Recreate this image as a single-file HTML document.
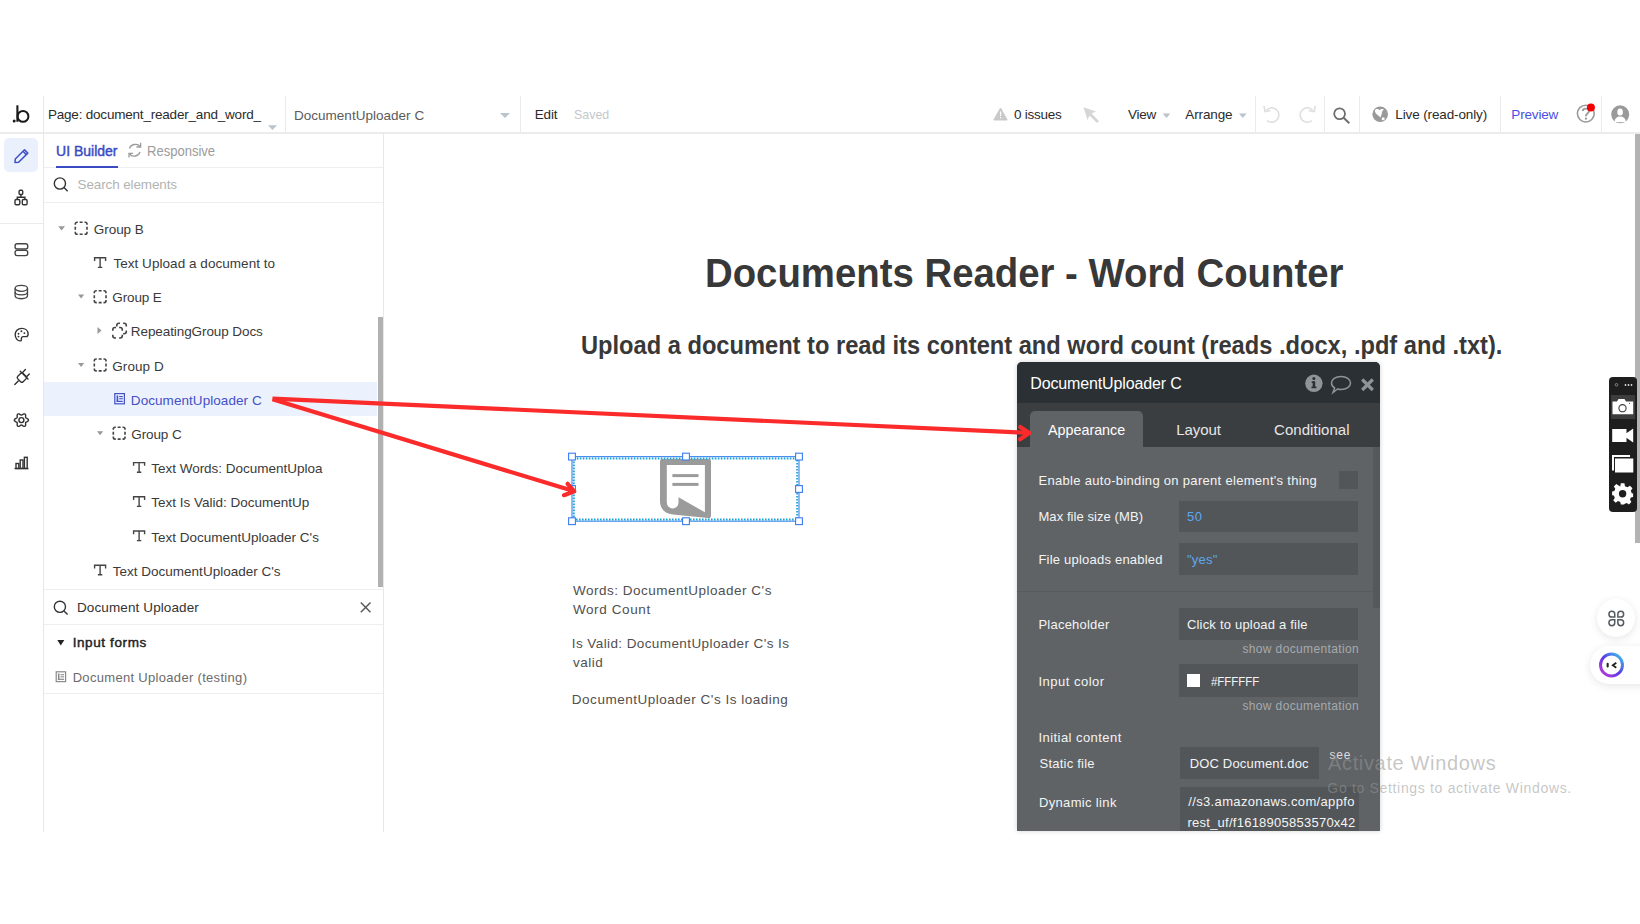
<!DOCTYPE html>
<html><head><meta charset="utf-8">
<style>
*{margin:0;padding:0;box-sizing:border-box}
html,body{width:1640px;height:924px;overflow:hidden;background:#fff;font-family:"Liberation Sans",sans-serif}
.a{position:absolute}
.t{position:absolute;white-space:nowrap;line-height:1}
.hl{position:absolute;height:1px;background:#e9ebed}
.vl{position:absolute;width:1px;background:#e9ebed}
svg{position:absolute;overflow:visible}
.ib{position:absolute;background:#525659}
</style></head><body>

<!-- ============ TOP BAR ============ -->
<div class="hl" style="left:0;top:132px;width:1640px;height:2px;background:#ececec"></div>
<div class="vl" style="left:285px;top:96px;height:37px"></div>
<div class="vl" style="left:520px;top:96px;height:37px"></div>
<div class="vl" style="left:1255px;top:96px;height:37px"></div>
<div class="vl" style="left:1324px;top:96px;height:37px"></div>
<div class="vl" style="left:1359px;top:96px;height:37px"></div>
<div class="vl" style="left:1500px;top:96px;height:37px"></div>
<div class="vl" style="left:1601px;top:96px;height:37px"></div>

<!-- logo .b -->
<svg style="left:0;top:0" width="40" height="133">
  <circle cx="14.2" cy="121.1" r="1.5" fill="#1a1a1a"/>
  <path d="M17.4 105.3 V121.8" stroke="#1a1a1a" stroke-width="2.1" fill="none"/>
  <circle cx="23.0" cy="116.4" r="5.4" stroke="#1a1a1a" stroke-width="2.0" fill="none"/>
</svg>
<!-- dropdown triangles -->
<svg style="left:0;top:0" width="1640" height="133">
  <path d="M268 125.2 L277 125.2 L272.5 130 Z" fill="#b9c4cc"/>
  <path d="M500 113 L510 113 L505 118 Z" fill="#b9c4cc"/>
  <path d="M1162.7 113.4 L1170.3 113.4 L1166.5 118 Z" fill="#b9c4cc"/>
  <path d="M1239 113.4 L1246.6 113.4 L1242.8 118 Z" fill="#b9c4cc"/>
  <!-- warning -->
  <path d="M1000.5 108 L1007.2 120 L993.8 120 Z" fill="#c9c9c9" stroke="#c9c9c9" stroke-width="1" stroke-linejoin="round"/>
  <rect x="1000" y="111.5" width="1.2" height="4.5" fill="#fff"/>
  <rect x="1000" y="117" width="1.2" height="1.3" fill="#fff"/>
  <!-- cursor -->
  <path d="M1083.5 107.2 L1096 111.5 L1091.5 113.5 L1099 121 L1097 123 L1089.5 115.5 L1087.5 120 Z" fill="#d6d6d6"/>
  <!-- undo / redo -->
  <path d="M1266.5 110 A7.2 7.2 0 1 1 1267 120.5" stroke="#dedede" stroke-width="1.6" fill="none"/>
  <path d="M1264 105.8 L1265 111.5 L1270.5 110.5" stroke="#dedede" stroke-width="1.6" fill="none"/>
  <path d="M1312.5 110 A7.2 7.2 0 1 0 1312 120.5" stroke="#dedede" stroke-width="1.6" fill="none"/>
  <path d="M1315.2 105.8 L1314.2 111.5 L1308.7 110.5" stroke="#dedede" stroke-width="1.6" fill="none"/>
  <!-- search -->
  <circle cx="1339.6" cy="113.8" r="5.4" stroke="#6e6e6e" stroke-width="1.8" fill="none"/>
  <path d="M1343.6 117.8 L1349.3 123.3" stroke="#6e6e6e" stroke-width="2" fill="none"/>
  <!-- globe -->
  <circle cx="1380.2" cy="114.2" r="7.8" fill="#9a9a9a"/>
  <path d="M1375 110.3 C1376 108.6 1378.5 108.8 1379.4 110.2 C1380.3 109.3 1381.8 108.8 1383.8 109.3 C1383.3 110.3 1382.5 110.8 1382.2 111.6 C1381.5 112.8 1382.3 113.6 1381.3 115 C1380.9 116 1381 116.8 1380.6 117.6 C1379.5 116.3 1378.3 115.5 1377 114.5 C1375.6 113.3 1374.6 112 1375 110.3 Z" fill="#fff"/>
  <circle cx="1383.2" cy="118.8" r="1.5" fill="#fff"/>
  <!-- help -->
  <circle cx="1585.8" cy="113.6" r="8.4" stroke="#9a9a9a" stroke-width="1.6" fill="none"/>
  <path d="M1582.8 111 C1582.8 107.8 1589 107.8 1589 111 C1589 113.2 1585.9 113.6 1585.9 116.2" stroke="#9a9a9a" stroke-width="1.9" fill="none"/>
  <rect x="1584.9" y="117.6" width="2" height="2" fill="#9a9a9a"/>
  <circle cx="1590.9" cy="107.4" r="4" fill="#f40000"/>
  <!-- user -->
  <circle cx="1620.2" cy="114.35" r="9" fill="#9a9a9a"/>
  <ellipse cx="1620.1" cy="112.1" rx="2.8" ry="3.5" fill="#fff"/>
  <path d="M1614.6 121.8 C1614.6 118.5 1617 117.2 1618.8 116.5 L1621.4 116.5 C1623.4 117.2 1625.8 118.5 1625.8 121.8 C1622.5 122.5 1617.9 122.5 1614.6 121.8 Z" fill="#fff"/>
</svg>

<!-- ============ LEFT RAIL ============ -->
<div class="vl" style="left:43px;top:96px;height:736px;background:#e6e8ea"></div>
<div class="hl" style="left:0;top:223px;width:43px"></div>
<div class="a" style="left:4px;top:138px;width:34px;height:34px;border-radius:5px;background:#eaf1fd"></div>
<svg style="left:0;top:0" width="44" height="480">
  <!-- pencil -->
  <path d="M15.3 159 L24.5 149.8 L27.8 153.1 L18.6 162.3 L15 162.5 Z" stroke="#3d50c8" stroke-width="1.5" fill="none" stroke-linejoin="round"/>
  <path d="M23 151.3 L26.3 154.6" stroke="#3d50c8" stroke-width="1.5"/>
  <!-- hierarchy -->
  <g stroke="#333" stroke-width="1.4" fill="none">
    <rect x="19.1" y="190.3" width="3.6" height="4.2" rx="1"/>
    <path d="M20.9 194.5 V197.2 M17.3 199.5 V197.2 H24.9 V199.5"/>
    <rect x="15" y="199.5" width="4.8" height="5.2" rx="1.2"/>
    <rect x="22.3" y="199.5" width="4.8" height="5.2" rx="1.2"/>
  </g>
  <!-- server -->
  <g stroke="#444" stroke-width="1.4" fill="none">
    <rect x="15.1" y="243.8" width="12.6" height="5.2" rx="2"/>
    <rect x="15.1" y="250.4" width="12.6" height="5.2" rx="2"/>
  </g>
  <!-- database -->
  <g stroke="#444" stroke-width="1.3" fill="none">
    <ellipse cx="21.3" cy="288.3" rx="6.2" ry="3"/>
    <path d="M15.1 288.3 V295.6 C15.1 299.8 27.5 299.8 27.5 295.6 V288.3"/>
    <path d="M15.1 292 C15.1 295.8 27.5 295.8 27.5 292"/>
  </g>
  <!-- palette -->
  <g stroke="#333" stroke-width="1.4" fill="none" stroke-linejoin="round">
    <path d="M21.8 328.4 C17.6 328.4 15.2 331.3 15.2 334.6 C15.2 338.2 17.6 340.9 20 340.9 C21.6 340.9 21.4 339.3 21.4 338.4 C21.4 337.4 22.2 336.6 23.2 336.6 H26 C27.4 336.6 28.1 335.6 28.1 334.2 C28.1 330.8 25.5 328.4 21.8 328.4 Z"/>
  </g>
  <circle cx="18.5" cy="333.7" r="0.95" fill="#333"/><circle cx="21.4" cy="331.3" r="0.95" fill="#333"/><circle cx="24.4" cy="333.1" r="0.95" fill="#333"/><circle cx="18.5" cy="336.6" r="0.95" fill="#333"/>
  <!-- plug -->
  <g stroke="#333" stroke-width="1.4" fill="none" stroke-linecap="round" stroke-linejoin="round">
    <rect x="18.1" y="373.8" width="7.6" height="7.6" rx="1.8" transform="rotate(45 21.9 377.6)"/>
    <path d="M20.3 371.3 L28 379"/>
    <path d="M22.6 372.4 L25.4 369.6 M26.8 376.6 L29.3 374.1"/>
    <path d="M18.3 380.9 L14.8 384.4"/>
  </g>
  <!-- gear -->
  <g stroke="#333" stroke-width="1.4" fill="none">
    <path d="M28.45 420.10 L28.39 420.47 L28.21 420.82 L27.94 421.14 L27.59 421.41 L27.20 421.65 L26.80 421.85 L26.43 422.03 L26.11 422.19 L25.86 422.37 L25.69 422.58 L25.59 422.82 L25.57 423.13 L25.58 423.49 L25.62 423.90 L25.64 424.34 L25.63 424.80 L25.56 425.24 L25.43 425.64 L25.21 425.97 L24.93 426.21 L24.58 426.34 L24.19 426.36 L23.77 426.28 L23.35 426.11 L22.95 425.90 L22.58 425.65 L22.24 425.42 L21.94 425.22 L21.66 425.09 L21.40 425.05 L21.14 425.09 L20.86 425.22 L20.56 425.42 L20.22 425.65 L19.85 425.90 L19.45 426.11 L19.03 426.28 L18.61 426.36 L18.22 426.34 L17.88 426.21 L17.59 425.97 L17.37 425.64 L17.24 425.24 L17.17 424.80 L17.16 424.34 L17.18 423.90 L17.22 423.49 L17.23 423.13 L17.21 422.82 L17.11 422.58 L16.94 422.37 L16.69 422.19 L16.37 422.03 L16.00 421.85 L15.60 421.65 L15.21 421.41 L14.86 421.14 L14.59 420.82 L14.41 420.47 L14.35 420.10 L14.41 419.73 L14.59 419.38 L14.86 419.06 L15.21 418.79 L15.60 418.55 L16.00 418.35 L16.37 418.17 L16.69 418.01 L16.94 417.83 L17.11 417.62 L17.21 417.38 L17.23 417.07 L17.22 416.71 L17.18 416.30 L17.16 415.86 L17.17 415.40 L17.24 414.96 L17.37 414.56 L17.59 414.23 L17.87 413.99 L18.22 413.86 L18.61 413.84 L19.03 413.92 L19.45 414.09 L19.85 414.30 L20.22 414.55 L20.56 414.78 L20.86 414.98 L21.14 415.11 L21.40 415.15 L21.66 415.11 L21.94 414.98 L22.24 414.78 L22.58 414.55 L22.95 414.30 L23.35 414.09 L23.77 413.92 L24.19 413.84 L24.58 413.86 L24.93 413.99 L25.21 414.23 L25.43 414.56 L25.56 414.96 L25.63 415.40 L25.64 415.86 L25.62 416.30 L25.58 416.71 L25.57 417.07 L25.59 417.38 L25.69 417.62 L25.86 417.83 L26.11 418.01 L26.43 418.17 L26.80 418.35 L27.20 418.55 L27.59 418.79 L27.94 419.06 L28.21 419.38 L28.39 419.73 L28.45 420.10 Z"/>
    <circle cx="21.4" cy="420.1" r="2.5"/>
  </g>
  <!-- bars -->
  <g stroke="#333" stroke-width="1.4" fill="none">
    <path d="M14.5 468.5 H28.5"/>
    <rect x="16" y="463.5" width="2.8" height="5"/>
    <rect x="20.2" y="460" width="2.8" height="8.5"/>
    <rect x="24.4" y="457.3" width="2.8" height="11.2"/>
  </g>
</svg>

<!-- ============ LEFT PANEL ============ -->
<div class="vl" style="left:383px;top:133px;height:699px;background:#e6e8ea"></div>
<div class="hl" style="left:44px;top:167px;width:339px;background:#eceef0"></div>
<div class="a" style="left:56px;top:166px;width:62px;height:2.3px;background:#3a4bc4"></div>
<svg style="left:0;top:0" width="384" height="700">
  <!-- responsive refresh -->
  <g stroke="#9b9b9b" stroke-width="1.3" fill="none">
    <path d="M129.5 148.5 C130.5 144.5 137 142.5 140 146.5"/>
    <path d="M140.6 142.8 V147 H136.5"/>
    <path d="M140 152 C139 156 132.5 158 129.6 154"/>
    <path d="M129 157.6 V153.4 H133.1"/>
  </g>
  <!-- search icons -->
  <g stroke="#333" stroke-width="1.4" fill="none">
    <circle cx="59.9" cy="183.5" r="5.6"/>
    <path d="M64 187.6 L67.6 191.3"/>
    <circle cx="59.9" cy="606.8" r="5.6"/>
    <path d="M64 610.9 L67.6 614.5"/>
    <path d="M360.8 602.4 L370.5 612.2 M370.5 602.4 L360.8 612.2" stroke="#555"/>
  </g>
</svg>
<div class="hl" style="left:44px;top:202px;width:339px;background:#eceef0"></div>
<!-- selected row -->
<div class="a" style="left:44px;top:382px;width:333px;height:34px;background:#ebf2fd"></div>
<!-- scrollbar -->
<div class="a" style="left:377.6px;top:317px;width:5.4px;height:270px;background:#b1b1b1"></div>
<div class="hl" style="left:44px;top:589px;width:339px;background:#eceef0"></div>
<div class="hl" style="left:44px;top:624px;width:339px;background:#eceef0"></div>
<div class="hl" style="left:44px;top:693px;width:339px;background:#eceef0"></div>
<svg style="left:0;top:0" width="384" height="700">
  <g fill="#999">
    <path d="M58.2 226.2 L65 226.2 L61.6 230.6 Z"/>
    <path d="M78 294.6 L84.2 294.6 L81.1 298.6 Z"/>
    <path d="M78 363 L84.2 363 L81.1 367 Z"/>
    <path d="M97 431.2 L103.2 431.2 L100.1 435.2 Z"/>
    <path d="M97.5 327 L101.5 330.5 L97.5 334 Z"/>
  </g>
  <path d="M57.3 640 L64.3 640 L60.8 645.4 Z" fill="#222"/>
  <!-- dashed group icons -->
  <g stroke="#444" stroke-width="1.6" fill="none">
    <path d="M75.3 224.8 V224.10000000000002 Q75.3 222.3 77.1 222.3 H77.8 M84.50 222.3 H85.20 Q87.0 222.3 87.0 224.10000000000002 V224.8 M87.0 231.70 V232.40 Q87.0 234.2 85.20 234.2 H84.50 M77.8 234.2 H77.1 Q75.3 234.2 75.3 232.40 V231.70 M79.65 222.3 H82.65 M79.65 234.2 H82.65 M75.3 226.75 V229.75 M87.0 226.75 V229.75"/>
    <path d="M94.3 293.2 V292.5 Q94.3 290.7 96.1 290.7 H96.8 M103.50 290.7 H104.20 Q106.0 290.7 106.0 292.5 V293.2 M106.0 300.10 V300.80 Q106.0 302.6 104.20 302.6 H103.50 M96.8 302.6 H96.1 Q94.3 302.6 94.3 300.80 V300.10 M98.65 290.7 H101.65 M98.65 302.6 H101.65 M94.3 295.15 V298.15 M106.0 295.15 V298.15"/>
    <path d="M94.3 361.5 V360.8 Q94.3 359.0 96.1 359.0 H96.8 M103.50 359.0 H104.20 Q106.0 359.0 106.0 360.8 V361.5 M106.0 368.40 V369.10 Q106.0 370.9 104.20 370.9 H103.50 M96.8 370.9 H96.1 Q94.3 370.9 94.3 369.10 V368.40 M98.65 359.0 H101.65 M98.65 370.9 H101.65 M94.3 363.45 V366.45 M106.0 363.45 V366.45"/>
    <path d="M113.3 429.7 V429.0 Q113.3 427.2 115.1 427.2 H115.8 M122.50 427.2 H123.20 Q125.0 427.2 125.0 429.0 V429.7 M125.0 436.60 V437.30 Q125.0 439.1 123.20 439.1 H122.50 M115.8 439.1 H115.1 Q113.3 439.1 113.3 437.30 V436.60 M117.65 427.2 H120.65 M117.65 439.1 H120.65 M113.3 431.65 V434.65 M125.0 431.65 V434.65"/>
    <path d="M112.8 330.7 V329.7 Q112.8 327.5 115.0 327.5 H116.0 M119.1 327.5 H120.1 Q122.3 327.5 122.3 329.7 V330.7 M122.3 334.8 V335.8 Q122.3 338.0 120.1 338.0 H119.1 M116.0 338.0 H115.0 Q112.8 338.0 112.8 335.8 V334.8 M116.8 326.5 V325.5 Q116.8 323.3 119.0 323.3 H120.0 M123.1 323.3 H124.1 Q126.3 323.3 126.3 325.5 V326.5 M126.3 330.6 V331.6 Q126.3 333.8 124.1 333.8 H123.1"/>
  </g>
  <!-- T icons -->
  <g fill="#444">
    <path d="M94.6 261.0 V257.8 H105.6 V261.0 M100.1 257.8 V268.0 M97.89999999999999 267.4 H102.3" stroke="#444" stroke-width="1.4" fill="none"/>
<path d="M133.6 465.8 V462.6 H144.6 V465.8 M139.1 462.6 V472.8 M136.9 472.2 H141.29999999999998" stroke="#444" stroke-width="1.4" fill="none"/>
<path d="M133.6 500.0 V496.8 H144.6 V500.0 M139.1 496.8 V507.0 M136.9 506.4 H141.29999999999998" stroke="#444" stroke-width="1.4" fill="none"/>
<path d="M133.6 534.2 V531.0 H144.6 V534.2 M139.1 531.0 V541.2 M136.9 540.6 H141.29999999999998" stroke="#444" stroke-width="1.4" fill="none"/>
<path d="M94.6 568.4 V565.1999999999999 H105.6 V568.4 M100.1 565.1999999999999 V575.4 M97.89999999999999 574.8 H102.3" stroke="#444" stroke-width="1.4" fill="none"/>
  </g>
</svg>
<svg style="left:0;top:0" width="384" height="700">
  <!-- uploader icon in tree (selected) -->
  <g fill="none" stroke="#4450c6" stroke-width="1.2">
    <rect x="114.8" y="393.6" width="9.6" height="10.2"/>
  </g>
  <g fill="#4450c6">
    <rect x="116.6" y="395.4" width="1.6" height="6.6"/>
    <rect x="119.2" y="396" width="3.6" height="1.1"/>
    <rect x="119.2" y="398.2" width="3.6" height="1.1"/>
    <rect x="116.6" y="400.8" width="6.2" height="1.2"/>
  </g>
  <!-- uploader icon in results -->
  <g fill="none" stroke="#8a8a8a" stroke-width="1.2">
    <rect x="56.2" y="671.8" width="9.4" height="9.8"/>
  </g>
  <g fill="#8a8a8a">
    <rect x="57.9" y="673.5" width="1.6" height="6.4"/>
    <rect x="60.5" y="674.2" width="3.6" height="1.1"/>
    <rect x="60.5" y="676.3" width="3.6" height="1.1"/>
    <rect x="57.9" y="678.7" width="6.2" height="1.2"/>
  </g>
</svg>

<!-- ============ CANVAS ============ -->
<!-- right scrollbar -->
<div class="a" style="left:1635px;top:134px;width:5px;height:409px;background:#b3b3b3"></div>

<!-- uploader element -->
<svg style="left:0;top:0" width="1640" height="924">
  <g transform="translate(660,459.1)">
    <path d="M2.2 0 H48.8 Q51 0 51 2.2 V56.6 C51 58.5 50 59.2 48 59 L13 55.5 C4.5 54.5 0 49.5 0 42 V2.2 Q0 0 2.2 0 Z" fill="#9b9b9b"/>
    <path d="M6.8 5.9 H44.9 V53.2 L18.5 38.1 V43.5 A5.85 5.85 0 0 1 6.8 43.5 Z" fill="#fff"/>
    <rect x="12.4" y="15" width="26.1" height="3" fill="#9b9b9b"/>
    <rect x="12.4" y="23.8" width="26.1" height="3" fill="#9b9b9b"/>
  </g>
  <!-- selection -->
  <rect x="572" y="456.6" width="227" height="64.6" fill="none" stroke="#4a8ff0" stroke-width="1.2"/>
  <rect x="573.8" y="458.4" width="223.4" height="61" fill="none" stroke="#1ea6d6" stroke-width="2" stroke-dasharray="1.6 1.4"/>
  <g fill="#fff" stroke="#3b7cf5" stroke-width="1.1">
    <rect x="568.6" y="453.2" width="6.8" height="6.8"/>
    <rect x="682.6" y="453.2" width="6.8" height="6.8"/>
    <rect x="795.6" y="453.2" width="6.8" height="6.8"/>
    <rect x="568.6" y="485.6" width="6.8" height="6.8"/>
    <rect x="795.6" y="485.6" width="6.8" height="6.8"/>
    <rect x="568.6" y="517.8" width="6.8" height="6.8"/>
    <rect x="682.6" y="517.8" width="6.8" height="6.8"/>
    <rect x="795.6" y="517.8" width="6.8" height="6.8"/>
  </g>
</svg>

<!-- ============ PROPERTY PANEL ============ -->
<div class="a" style="left:1017px;top:362px;width:363px;height:469px;border-radius:5px 5px 0 0;background:#5f6366;box-shadow:0 0 5px rgba(0,0,0,0.18);overflow:hidden">
  <div class="a" style="left:0;top:0;width:363px;height:41px;background:#2a3033"></div>
  <div class="a" style="left:0;top:41px;width:363px;height:44px;background:#3a3e41"></div>
  <div class="a" style="left:13px;top:49px;width:113px;height:36px;background:#5f6366;border-radius:5px 5px 0 0"></div>
  <div class="a" style="left:356px;top:85px;width:7px;height:161px;background:#55595c"></div>
  <div class="a" style="left:0;top:229px;width:356px;height:1px;background:#575b5e"></div>
  <div class="ib" style="left:322px;top:109px;width:19px;height:18px"></div>
  <div class="ib" style="left:162px;top:139px;width:179px;height:31px"></div>
  <div class="ib" style="left:162px;top:181px;width:179px;height:32px"></div>
  <div class="ib" style="left:162px;top:246px;width:179px;height:32px"></div>
  <div class="ib" style="left:162px;top:302px;width:179px;height:33px"></div>
  <div class="a" style="left:170px;top:312px;width:13px;height:13px;background:#fff"></div>
  <div class="ib" style="left:162.5px;top:384.5px;width:139px;height:32px"></div>
  <div class="ib" style="left:162.5px;top:425px;width:179px;height:50px"></div>
</div>
<svg style="left:0;top:0" width="1640" height="924">
  <!-- info -->
  <circle cx="1313.9" cy="383.3" r="8.7" fill="#8e9497"/>
  <circle cx="1313.9" cy="378.6" r="1.5" fill="#2a3033"/>
  <path d="M1311.7 381.3 H1315.2 V386.6 H1316.4 V388.2 H1311.5 V386.6 H1312.7 V382.9 H1311.7 Z" fill="#2a3033"/>
  <!-- comment bubble -->
  <path d="M1341 376.5 C1346.5 376.5 1350.5 379.3 1350.5 383 C1350.5 386.8 1346.5 389.5 1341 389.5 C1339.5 389.5 1338.5 389.3 1337.5 389 L1333 392.5 L1334.6 388 C1332.5 386.8 1331.5 385 1331.5 383 C1331.5 379.3 1335.5 376.5 1341 376.5 Z" stroke="#8e9497" stroke-width="1.5" fill="none"/>
  <!-- close -->
  <path d="M1362.2 379.5 L1372.8 390 M1372.8 379.5 L1362.2 390" stroke="#8e9497" stroke-width="3.2"/>
</svg>

<!-- ============ RIGHT FLOATING TOOLS ============ -->
<div class="a" style="left:1608.5px;top:377px;width:28px;height:134.5px;border-radius:4px;background:#1e1e1e"></div>
<div class="a" style="left:1610.5px;top:394.6px;width:24px;height:24px;background:#3d3d3d"></div>
<svg style="left:0;top:0" width="1640" height="924">
  <circle cx="1616.5" cy="384.8" r="1.3" stroke="#bbb" stroke-width="0.6" fill="none"/>
  <circle cx="1625.5" cy="385" r="0.9" fill="#ddd"/><circle cx="1628.5" cy="385" r="0.9" fill="#ddd"/><circle cx="1631.5" cy="385" r="0.9" fill="#ddd"/>
  <!-- camera -->
  <path d="M1612.5 401.5 H1617 L1618.5 399 H1624.5 L1626 401.5 H1633.2 V414.2 H1612.5 Z" fill="#fff"/>
  <circle cx="1622.5" cy="408.2" r="3.6" fill="none" stroke="#3d3d3d" stroke-width="1.1"/>
  <circle cx="1629.5" cy="403.3" r="0.6" fill="#3d3d3d"/>
  <!-- video -->
  <path d="M1612.2 429 H1626.5 V442 H1612.2 Z M1626 433.5 L1633.2 428.5 V442.5 L1626 437.5 Z" fill="#fff"/>
  <!-- windows -->
  <path d="M1612 455 H1630 V457 H1614 V470.5 H1612 Z" fill="#fff"/>
  <rect x="1615" y="458.5" width="18.3" height="14" fill="#fff"/>
  <!-- gear -->
  <g transform="translate(1622.6,493.7)">
    <path d="M-1.8 -10.5 H1.8 L2.4 -7.5 L4.8 -6.4 L7.4 -8 L9.9 -5.5 L8.2 -2.9 L9.2 -0.5 L10.5 -0.3 V3.3 L8.3 3.7 L7.4 5.9 L8.8 8.2 L6.3 10.7 L4.1 9.2 L1.8 10.2 L1.5 10.7 H-1.8 L-2.3 8.3 L-4.6 7.4 L-6.9 9 L-9.4 6.5 L-7.8 4.2 L-8.7 1.8 L-10.5 1.5 V-2.1 L-8.3 -2.6 L-7.3 -4.9 L-8.8 -7.2 L-6.3 -9.7 L-4 -8.1 L-2.3 -7.1 Z" fill="#fff"/>
    <circle cx="0" cy="0" r="3.7" fill="#1e1e1e"/>
  </g>
</svg>
<div class="a" style="left:1597px;top:599px;width:38px;height:38px;border-radius:50%;background:#fff;box-shadow:0 2px 8px rgba(0,0,0,0.10)"></div>
<svg style="left:0;top:0" width="1640" height="924">
  <g stroke="#555a60" stroke-width="1.5" fill="none">
    <path d="M1614.75 617.05 H1611.85 A2.9 2.9 0 1 1 1614.75 614.15 Z"/>
    <path d="M1617.85 617.05 H1620.75 A2.9 2.9 0 1 0 1617.85 614.15 Z"/>
    <path d="M1614.75 619.85 H1611.85 A2.9 2.9 0 1 0 1614.75 622.75 Z"/>
    <path d="M1617.85 619.85 H1620.75 A2.9 2.9 0 1 1 1617.85 622.75 Z"/>
  </g>
</svg>
<div class="a" style="left:1590px;top:646px;width:70px;height:37.5px;border-radius:19px;background:#fff;box-shadow:0 2px 8px rgba(0,0,0,0.10)"></div>
<svg style="left:0;top:0" width="1640" height="924">
  <defs><linearGradient id="gr" x1="0" y1="1" x2="1" y2="0"><stop offset="0" stop-color="#c93bd6"/><stop offset="0.5" stop-color="#5a3be8"/><stop offset="1" stop-color="#3ad0e8"/></linearGradient></defs>
  <circle cx="1611.5" cy="665" r="11" stroke="url(#gr)" stroke-width="3" fill="#fff"/>
  <rect x="1606.6" y="662.8" width="2.1" height="4.8" rx="1" fill="#222"/>
  <path d="M1616.3 662.7 L1612.8 665.3 L1616.3 667.7" stroke="#222" stroke-width="1.8" fill="none"/>
</svg>

<div class="t" id="t0" style="left:47.95px;top:107.57px;font-size:13.5px;color:#2b2b2b;letter-spacing:-0.203px;">Page: document_reader_and_word_</div>
<div class="t" id="t1" style="left:293.94px;top:108.87px;font-size:13.5px;color:#5b5b5b;letter-spacing:0.024px;">DocumentUploader C</div>
<div class="t" id="t2" style="left:534.75px;top:107.57px;font-size:13.5px;color:#2b2b2b;letter-spacing:-0.151px;">Edit</div>
<div class="t" id="t3" style="left:574.31px;top:107.57px;font-size:13.5px;color:#c4c7cb;transform:scaleX(0.9192);transform-origin:0 0;">Saved</div>
<div class="t" id="t4" style="left:1014.08px;top:107.57px;font-size:13.5px;color:#2b2b2b;letter-spacing:-0.254px;">0 issues</div>
<div class="t" id="t5" style="left:1128.10px;top:107.57px;font-size:13.5px;color:#2b2b2b;letter-spacing:-0.327px;">View</div>
<div class="t" id="t6" style="left:1185.30px;top:107.57px;font-size:13.5px;color:#2b2b2b;letter-spacing:-0.130px;">Arrange</div>
<div class="t" id="t7" style="left:1395.35px;top:107.57px;font-size:13.5px;color:#2b2b2b;letter-spacing:-0.129px;">Live (read-only)</div>
<div class="t" id="t8" style="left:1511.35px;top:107.57px;font-size:13.5px;color:#4b4fe3;letter-spacing:-0.171px;">Preview</div>
<div class="t" id="t9" style="left:56.12px;top:144.15px;font-size:14px;color:#3a4bc4;letter-spacing:-0.014px;-webkit-text-stroke:0.45px #3a4bc4;">UI Builder</div>
<div class="t" id="t10" style="left:147.48px;top:144.15px;font-size:14px;color:#9b9b9b;transform:scaleX(0.9302);transform-origin:0 0;">Responsive</div>
<div class="t" id="t11" style="left:77.58px;top:178.47px;font-size:13.5px;color:#b3b3b3;letter-spacing:-0.133px;">Search elements</div>
<div class="t" id="t12" style="left:93.87px;top:222.77px;font-size:13.5px;color:#3a3a3a;letter-spacing:-0.063px;">Group B</div>
<div class="t" id="t13" style="left:113.39px;top:256.97px;font-size:13.5px;color:#3a3a3a;letter-spacing:0.048px;">Text Upload a document to</div>
<div class="t" id="t14" style="left:112.27px;top:291.17px;font-size:13.5px;color:#3a3a3a;letter-spacing:-0.129px;">Group E</div>
<div class="t" id="t15" style="left:130.84px;top:325.37px;font-size:13.5px;color:#3a3a3a;letter-spacing:-0.089px;">RepeatingGroup Docs</div>
<div class="t" id="t16" style="left:112.27px;top:359.57px;font-size:13.5px;color:#3a3a3a;letter-spacing:0.063px;">Group D</div>
<div class="t" id="t17" style="left:130.84px;top:393.77px;font-size:13.5px;color:#4450c6;letter-spacing:0.059px;">DocumentUploader C</div>
<div class="t" id="t18" style="left:131.27px;top:427.97px;font-size:13.5px;color:#3a3a3a;letter-spacing:-0.103px;">Group C</div>
<div class="t" id="t19" style="left:151.19px;top:462.17px;font-size:13.5px;color:#3a3a3a;letter-spacing:-0.010px;">Text Words: DocumentUploa</div>
<div class="t" id="t20" style="left:151.19px;top:496.37px;font-size:13.5px;color:#3a3a3a;">Text Is Valid: DocumentUp</div>
<div class="t" id="t21" style="left:151.19px;top:530.57px;font-size:13.5px;color:#3a3a3a;letter-spacing:0.003px;">Text DocumentUploader C's</div>
<div class="t" id="t22" style="left:112.69px;top:564.77px;font-size:13.5px;color:#3a3a3a;letter-spacing:0.012px;">Text DocumentUploader C's</div>
<div class="t" id="t23" style="left:76.94px;top:600.57px;font-size:13.5px;color:#333;letter-spacing:0.116px;">Document Uploader</div>
<div class="t" id="t24" style="left:72.64px;top:635.87px;font-size:13.5px;color:#222;letter-spacing:0.615px;-webkit-text-stroke:0.45px #222;">Input forms</div>
<div class="t" id="t25" style="left:72.68px;top:670.50px;font-size:13.0px;color:#6b6b6b;letter-spacing:0.312px;">Document Uploader (testing)</div>
<div class="t" id="t26" style="left:704.50px;top:253.09px;font-size:41px;color:#383838;font-weight:700;transform:scaleX(0.9352);transform-origin:0 0;">Documents Reader - Word Counter</div>
<div class="t" id="t27" style="left:581.19px;top:332.29px;font-size:26px;color:#383838;font-weight:700;transform:scaleX(0.9099);transform-origin:0 0;">Upload a document to read its content and word count (reads .docx, .pdf and .txt).</div>
<div class="t" id="t28" style="left:572.90px;top:583.57px;font-size:13.5px;color:#505050;letter-spacing:0.505px;">Words: DocumentUploader C's</div>
<div class="t" id="t29" style="left:572.90px;top:602.67px;font-size:13.5px;color:#505050;letter-spacing:0.608px;">Word Count</div>
<div class="t" id="t30" style="left:571.85px;top:636.57px;font-size:13.5px;color:#505050;letter-spacing:0.404px;">Is Valid: DocumentUploader C's Is</div>
<div class="t" id="t31" style="left:572.90px;top:655.57px;font-size:13.5px;color:#505050;letter-spacing:0.498px;">valid</div>
<div class="t" id="t32" style="left:571.85px;top:692.77px;font-size:13.5px;color:#505050;letter-spacing:0.508px;">DocumentUploader C's Is loading</div>
<div class="t" id="t33" style="left:1030.25px;top:376.26px;font-size:16px;color:#ffffff;letter-spacing:-0.132px;">DocumentUploader C</div>
<div class="t" id="t34" style="left:1048.30px;top:421.80px;font-size:15px;color:#ffffff;transform:scaleX(0.9541);transform-origin:0 0;">Appearance</div>
<div class="t" id="t35" style="left:1176.33px;top:421.80px;font-size:15px;color:#e6e6e6;letter-spacing:-0.083px;">Layout</div>
<div class="t" id="t36" style="left:1274.00px;top:421.80px;font-size:15px;color:#e6e6e6;letter-spacing:0.054px;">Conditional</div>
<div class="t" id="t37" style="left:1038.48px;top:473.60px;font-size:13.0px;color:#f4f4f4;letter-spacing:0.305px;">Enable auto-binding on parent element's thing</div>
<div class="t" id="t38" style="left:1038.48px;top:510.40px;font-size:13.0px;color:#f4f4f4;letter-spacing:0.071px;">Max file size (MB)</div>
<div class="t" id="t39" style="left:1038.48px;top:552.60px;font-size:13.0px;color:#f4f4f4;letter-spacing:0.214px;">File uploads enabled</div>
<div class="t" id="t40" style="left:1186.99px;top:510.40px;font-size:13.0px;color:#5ca7f0;letter-spacing:0.470px;">50</div>
<div class="t" id="t41" style="left:1186.99px;top:552.80px;font-size:13.0px;color:#5ca7f0;letter-spacing:0.250px;">"yes"</div>
<div class="t" id="t42" style="left:1038.48px;top:617.60px;font-size:13.0px;color:#f4f4f4;letter-spacing:0.222px;">Placeholder</div>
<div class="t" id="t43" style="left:1186.89px;top:617.60px;font-size:13.0px;color:#f4f4f4;letter-spacing:0.205px;">Click to upload a file</div>
<div class="t" id="t44" style="left:1242.40px;top:643.04px;font-size:12px;color:#a6aaad;letter-spacing:0.371px;">show documentation</div>
<div class="t" id="t45" style="left:1038.48px;top:675.00px;font-size:13.0px;color:#f4f4f4;letter-spacing:0.498px;">Input color</div>
<div class="t" id="t46" style="left:1211.00px;top:675.00px;font-size:13.0px;color:#f4f4f4;transform:scaleX(0.8815);transform-origin:0 0;">#FFFFFF</div>
<div class="t" id="t47" style="left:1242.40px;top:700.44px;font-size:12px;color:#a6aaad;letter-spacing:0.371px;">show documentation</div>
<div class="t" id="t48" style="left:1038.48px;top:731.30px;font-size:13.0px;color:#f4f4f4;letter-spacing:0.441px;">Initial content</div>
<div class="t" id="t49" style="left:1039.59px;top:757.00px;font-size:13.0px;color:#f4f4f4;letter-spacing:0.219px;">Static file</div>
<div class="t" id="t50" style="left:1189.68px;top:757.00px;font-size:13.0px;color:#f4f4f4;letter-spacing:0.173px;">DOC Document.doc</div>
<div class="t" id="t51" style="left:1329.50px;top:748.64px;font-size:12px;color:#dcdcdc;letter-spacing:0.838px;">see</div>
<div class="t" id="t52" style="left:1038.98px;top:795.80px;font-size:13.0px;color:#f4f4f4;letter-spacing:0.339px;">Dynamic link</div>
<div class="t" id="t53" style="left:1188.30px;top:795.30px;font-size:13.0px;color:#f4f4f4;letter-spacing:0.343px;">//s3.amazonaws.com/appfo</div>
<div class="t" id="t54" style="left:1187.49px;top:815.50px;font-size:13.0px;color:#f4f4f4;letter-spacing:0.247px;">rest_uf/f1618905853570x42</div>
<div class="t" id="t55" style="left:1328.00px;top:752.87px;font-size:20px;color:rgba(150,150,150,0.55);letter-spacing:0.653px;">Activate Windows</div>
<div class="t" id="t56" style="left:1327.34px;top:781.15px;font-size:14px;color:rgba(150,150,150,0.55);letter-spacing:0.674px;">Go to Settings to activate Windows.</div>
<!-- ============ RED ARROWS ============ -->
<svg style="left:0;top:0" width="1640" height="924">
  <g stroke="#fb2b2b" stroke-width="4.2" fill="none" stroke-linecap="butt" stroke-linejoin="round">
    <path d="M272.5 398.6 L1028 432.8"/>
    <path d="M272.5 399.2 L573.5 491.1"/>
  </g>
  <g stroke="#fb2b2b" stroke-width="4.2" fill="none" stroke-linecap="round" stroke-linejoin="round">
    <path d="M1020.3 426.9 L1029.3 433.1 L1020.1 439.3"/>
    <path d="M567.6 483.8 L574.3 491.4 L564 495.2"/>
  </g>
</svg>
</body></html>
